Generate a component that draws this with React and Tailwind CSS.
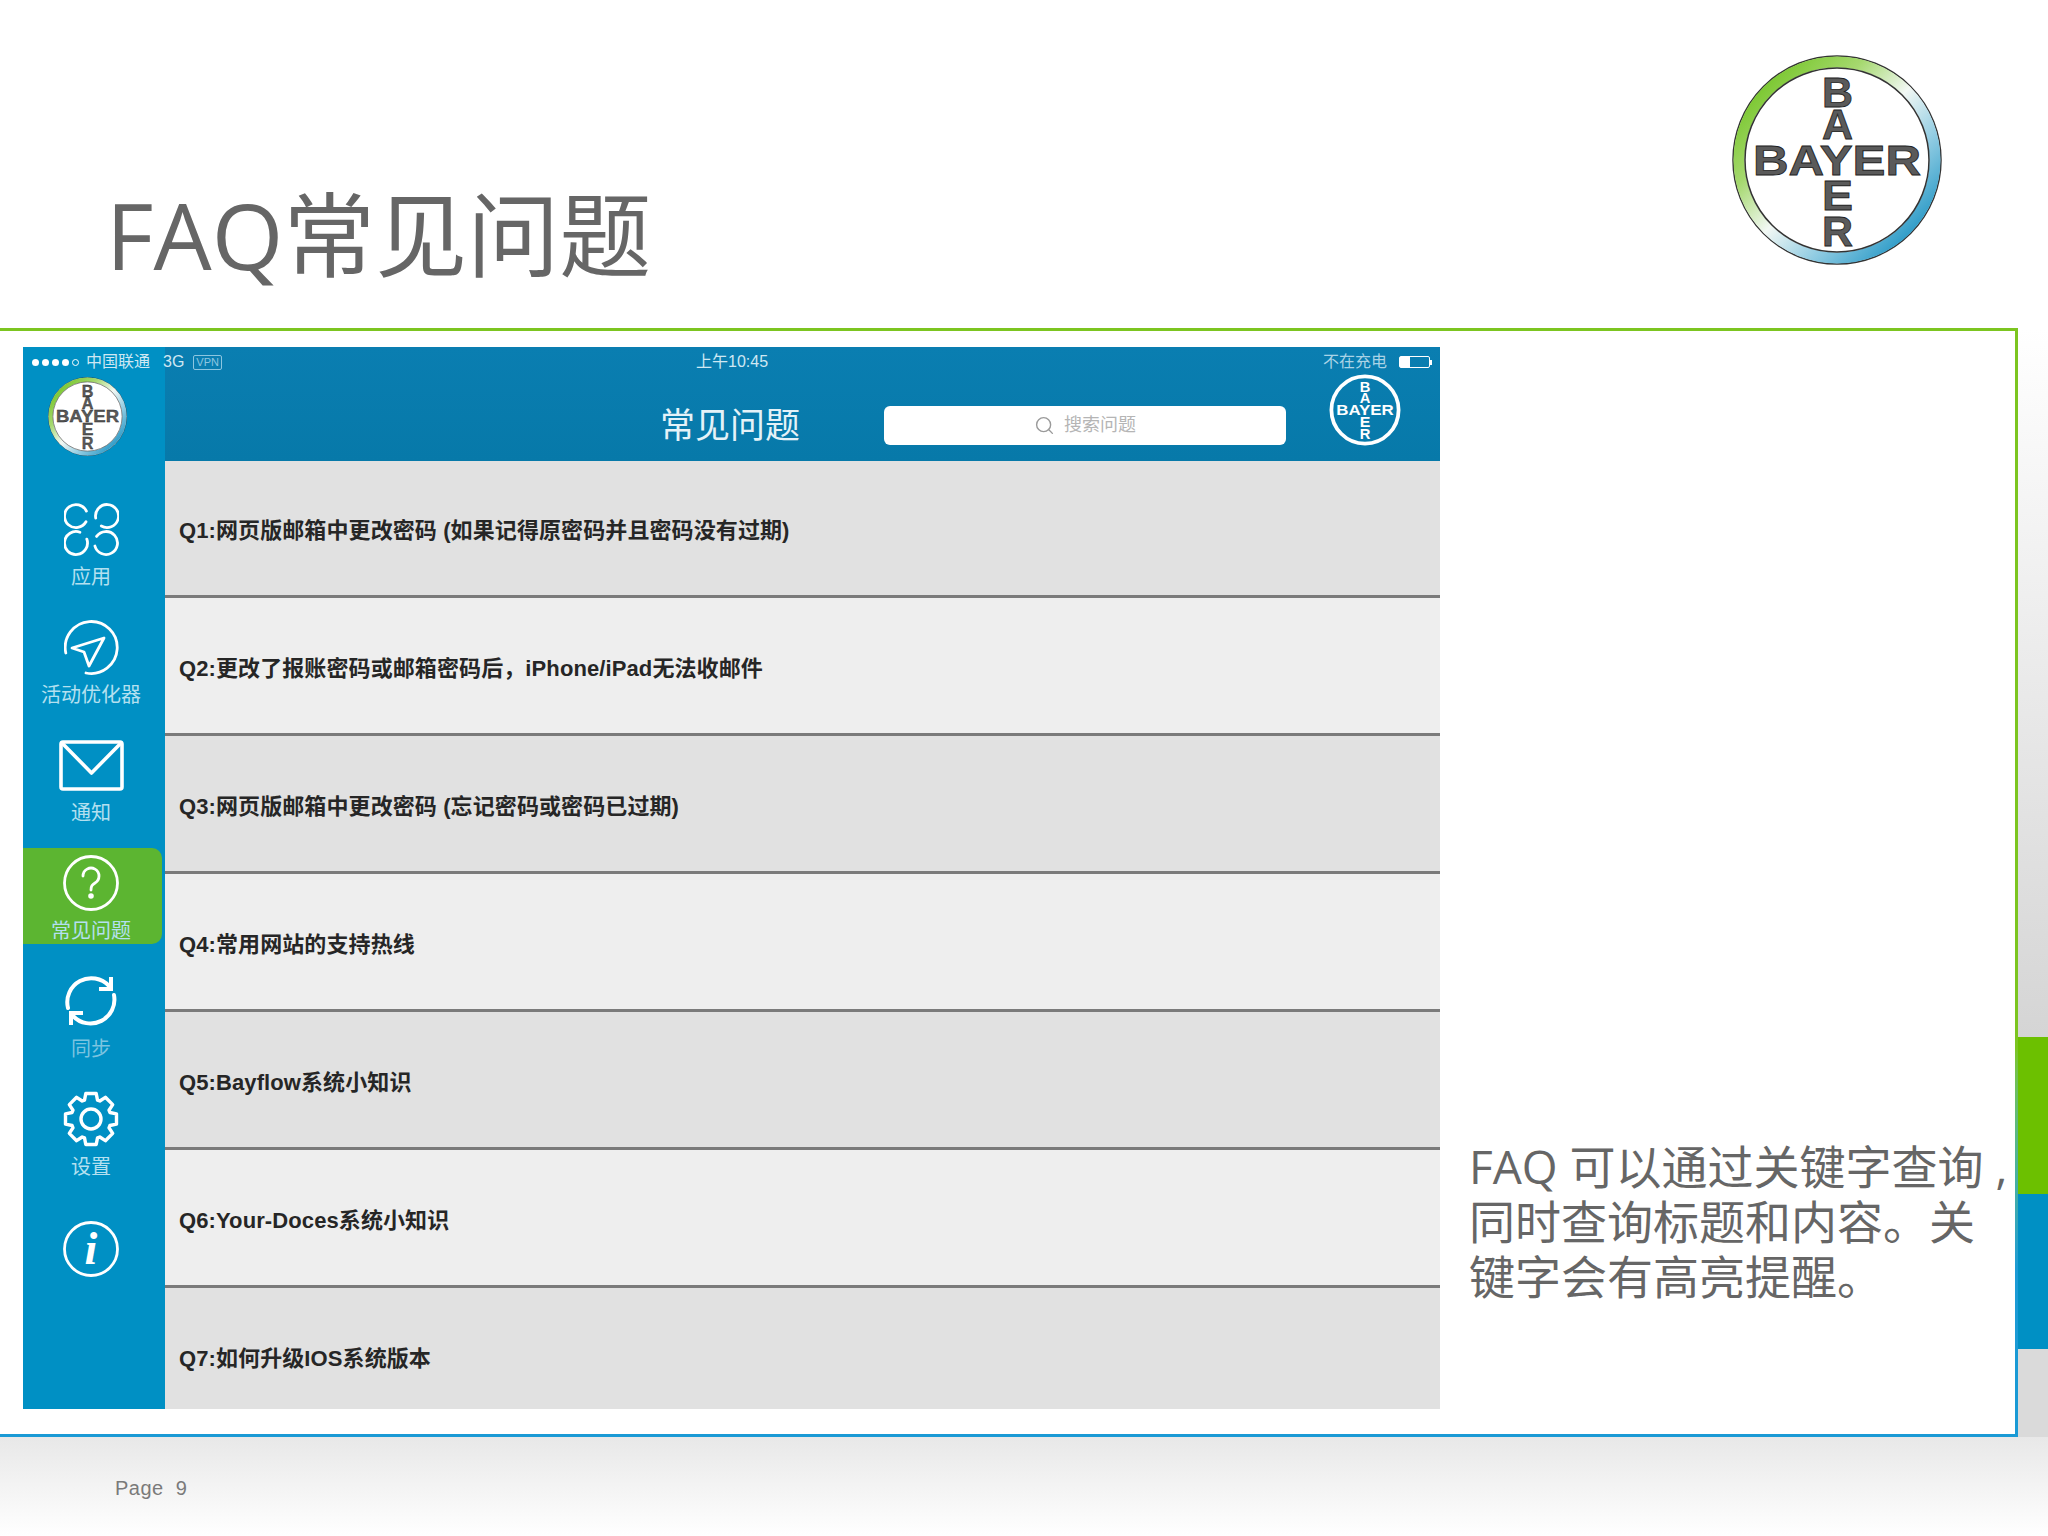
import { Search } from "lucide-react";

const questions = [
  "Q1:网页版邮箱中更改密码 (如果记得原密码并且密码没有过期)",
  "Q2:更改了报账密码或邮箱密码后，iPhone/iPad无法收邮件",
  "Q3:网页版邮箱中更改密码 (忘记密码或密码已过期)",
  "Q4:常用网站的支持热线",
  "Q5:Bayflow系统小知识",
  "Q6:Your-Doces系统小知识",
  "Q7:如何升级IOS系统版本",
];

function LogoLetters({ fill, stroke }) {
  const letter = (ch, y) => (
    <text x="90" y={y} textLength="31" lengthAdjust="spacingAndGlyphs" fontFamily="Liberation Sans" fontWeight="700" fontSize="42" fill={fill} stroke={stroke} strokeWidth="0.8">
      {ch}
    </text>
  );
  return (
    <>
      <text x="21" y="120" textLength="168" lengthAdjust="spacingAndGlyphs" fontFamily="Liberation Sans" fontWeight="700" fontSize="42" fill={fill} stroke={stroke} strokeWidth="0.8">
        BAYER
      </text>
      {letter("B", 52)}
      {letter("A", 84)}
      {letter("E", 155)}
      {letter("R", 191)}
    </>
  );
}

function BayerLogo({ className, id }) {
  return (
    <svg viewBox="0 0 210 210" className={className}>
      <defs>
        <linearGradient id={id} x1="0.12" y1="0.12" x2="0.88" y2="0.88">
          <stop offset="0" stopColor="#7cc832" />
          <stop offset="0.25" stopColor="#a5d86e" />
          <stop offset="0.5" stopColor="#f2f8f4" />
          <stop offset="0.75" stopColor="#8fcbe2" />
          <stop offset="1" stopColor="#2f9cc8" />
        </linearGradient>
      </defs>
      <circle cx="105" cy="105" r="104" fill="#fff" stroke="#333" strokeWidth="1.5" />
      <circle cx="105" cy="105" r="98" fill="none" stroke={`url(#${id})`} strokeWidth="11" />
      <circle cx="105" cy="105" r="92" fill="#fff" stroke="#333" strokeWidth="1.5" />
      <LogoLetters fill="#5a5a5a" stroke="#222" />
    </svg>
  );
}

function WhiteLogo() {
  return (
    <svg viewBox="0 0 210 210" className="h-[72px] w-[72px]">
      <circle cx="105" cy="105" r="98" fill="none" stroke="#fff" strokeWidth="11" />
      <LogoLetters fill="#fff" stroke="none" />
    </svg>
  );
}

const iconStroke = { fill: "none", stroke: "#fff", strokeLinecap: "round", strokeLinejoin: "round" };

// open circle, the gap runs clockwise from gapStart to gapEnd (degrees, y down)
function openCircle(cx, cy, r, gapStart, gapEnd) {
  const at = (deg) => {
    const a = (deg * Math.PI) / 180;
    return `${(cx + r * Math.cos(a)).toFixed(1)} ${(cy + r * Math.sin(a)).toFixed(1)}`;
  };
  return `M${at(gapEnd)}A${r} ${r} 0 1 1 ${at(gapStart)}`;
}

function AppsIcon() {
  return (
    <svg viewBox="0 0 55 53" className="h-[53px] w-[55px]" {...iconStroke} strokeWidth="2.8">
      <path d={openCircle(12, 13, 11.5, -25, 30)} />
      <path d={openCircle(43, 13, 11.5, 120, 170)} />
      <path d={openCircle(12, 40, 11.5, -70, -20)} />
      <path d={openCircle(42, 40, 11.5, 165, 215)} />
    </svg>
  );
}

function NavIcon() {
  return (
    <svg viewBox="0 0 55 55" className="h-[55px] w-[55px]" {...iconStroke} strokeWidth="2.8">
      <path d="M1.8 33A26 26 0 1 1 22 53" />
      <path d="M40 18L8 28L20 32L25 46Z" />
    </svg>
  );
}

function MailIcon() {
  return (
    <svg viewBox="0 0 65 51" className="h-[51px] w-[65px]" {...iconStroke} strokeWidth="3.6">
      <rect x="2" y="2" width="61" height="47" rx="2" />
      <path d="M3 3L32.5 33L62 3" />
    </svg>
  );
}

function HelpIcon() {
  return (
    <svg viewBox="0 0 56 56" className="h-[56px] w-[56px]" {...iconStroke} strokeWidth="2.8">
      <circle cx="28" cy="28" r="26.5" />
      <path d="M20 21a8 8 0 1 1 12 7c-3 2-4 3-4 7" />
      <circle cx="28" cy="41" r="1.4" fill="#fff" />
    </svg>
  );
}

function SyncIcon() {
  return (
    <svg viewBox="0 0 52 52" className="h-[52px] w-[52px]" {...iconStroke} strokeWidth="4">
      <path d="M3 33A24 24 0 0 1 44 11" />
      <path d="M46 2V14H34" strokeLinecap="butt" strokeLinejoin="miter" />
      <path d="M49 20A24 24 0 0 1 8 41" />
      <path d="M6 50V38H18" strokeLinecap="butt" strokeLinejoin="miter" />
    </svg>
  );
}

// gear outline with 8 teeth
function gearPath() {
  const pts = [];
  for (let i = 0; i < 8; i++) {
    const a = (i * Math.PI) / 4;
    [[-0.33, 20], [-0.2, 26], [0.2, 26], [0.33, 20]].forEach(([d, r]) => {
      pts.push(`${(28 + r * Math.cos(a + d)).toFixed(1)} ${(28 + r * Math.sin(a + d)).toFixed(1)}`);
    });
  }
  return `M${pts.join("L")}Z`;
}

function GearIcon() {
  return (
    <svg viewBox="0 0 56 56" className="h-[56px] w-[56px]" {...iconStroke} strokeWidth="3.4">
      <path d={gearPath()} />
      <circle cx="28" cy="28" r="10" />
    </svg>
  );
}

function InfoIcon() {
  return (
    <svg viewBox="0 0 56 56" className="h-[56px] w-[56px]">
      <circle cx="28" cy="28" r="26.5" fill="none" stroke="#fff" strokeWidth="2.8" />
      <text x="28" y="43" textAnchor="middle" fontFamily="Liberation Serif" fontStyle="italic" fontWeight="700" fontSize="46" fill="#fff">
        i
      </text>
    </svg>
  );
}

const navItems = [
  { label: "应用", icon: <AppsIcon /> },
  { label: "活动优化器", icon: <NavIcon /> },
  { label: "通知", icon: <MailIcon /> },
  { label: "常见问题", icon: <HelpIcon />, active: true },
  { label: "同步", icon: <SyncIcon />, dim: true },
  { label: "设置", icon: <GearIcon /> },
];

function Sidebar() {
  return (
    <div className="flex h-full w-[142px] shrink-0 flex-col bg-[#0090c4]">
      <div className="pl-[25px] pt-[30px]">
        <BayerLogo className="h-[79px] w-[79px]" id="ring-small" />
      </div>
      <div className="mt-[38px] flex flex-col gap-[22px]">
        {navItems.map((item) => (
          <div
            key={item.label}
            className={`flex h-[96px] w-[139px] flex-col items-center rounded-r-[10px] pr-[3px] pt-[7px] ${item.active ? "bg-[#5cb531]" : ""}`}
          >
            <div className="flex h-[56px] items-center justify-center">{item.icon}</div>
            <div className={`mt-[8px] text-[20px] leading-[24px] ${item.dim ? "text-[#7cc4e0]" : "text-[#b4e0f0]"}`}>
              {item.label}
            </div>
          </div>
        ))}
        <div className="mt-[12px] flex w-[139px] justify-center pr-[3px] pt-[7px]">
          <InfoIcon />
        </div>
      </div>
    </div>
  );
}

function StatusBar() {
  return (
    <div className="absolute left-0 right-0 top-0 flex h-[30px] items-center text-[16px] text-[#cfe8f3]">
      <div className="flex w-[230px] items-center pl-[9px]">
        <div className="flex gap-[3px]">
          {[0, 1, 2, 3].map((i) => (
            <span key={i} className="h-[7px] w-[7px] rounded-full bg-white" />
          ))}
          <span className="h-[7px] w-[7px] rounded-full border border-white" />
        </div>
        <span className="ml-[7px]">中国联通</span>
        <span className="ml-[13px]">3G</span>
        <span className="ml-[9px] rounded-[2px] border border-[#8cc6e0] px-[2px] text-[11px] leading-[13px] text-[#8cc6e0]">VPN</span>
      </div>
      <div className="ml-[443px] w-[76px] whitespace-nowrap">上午10:45</div>
      <div className="ml-[551px] whitespace-nowrap text-[#a9d3e6]">不在充电</div>
      <div className="ml-[12px] flex items-center">
        <div className="h-[12px] w-[31px] rounded-[2px] border border-white">
          <div className="h-full w-[10px] bg-white" />
        </div>
        <div className="h-[5px] w-[2px] bg-white" />
      </div>
    </div>
  );
}

function AppHeader() {
  return (
    <div className="flex h-[114px] shrink-0 items-end bg-gradient-to-b from-[#0a7eb1] to-[#0779a9] pb-[16px]">
      <div className="w-[635px] whitespace-nowrap text-right text-[35px] leading-[38px] text-[#e4f2f8]">常见问题</div>
      <div className="ml-[84px] flex h-[39px] w-[402px] items-center justify-center gap-[9px] rounded-[6px] bg-white text-[18px] text-[#b5b5b5]">
        <Search size={21} color="#9a9a9a" strokeWidth={1.6} />
        <span>搜索问题</span>
      </div>
      <div className="ml-[43px] -mb-[1px]">
        <WhiteLogo />
      </div>
    </div>
  );
}

function QuestionRow({ text, index }) {
  return (
    <div
      className={`flex shrink-0 items-center border-b-[3px] border-b-[#7a7a7a] pl-[14px] pt-[5px] text-[22px] font-bold tracking-[0.1px] text-[#262626] ${index === 0 ? "h-[137px]" : "h-[138px]"} ${index % 2 === 1 ? "bg-[#eeeeee]" : "bg-[#e1e1e1]"}`}
    >
      {text}
    </div>
  );
}

function AppScreen() {
  return (
    <div className="relative flex h-[1062px] w-[1417px] shrink-0 overflow-hidden">
      <Sidebar />
      <div className="flex min-w-0 flex-1 flex-col">
        <AppHeader />
        {questions.map((q, i) => (
          <QuestionRow key={q} text={q} index={i} />
        ))}
      </div>
      <StatusBar />
    </div>
  );
}

export default function App() {
  return (
    <div className="flex h-[1536px] w-[2048px] flex-col overflow-hidden bg-white font-['Liberation_Sans','Noto_Sans_CJK_SC',sans-serif]">
      <div className="flex h-[328px] shrink-0 items-start justify-between pl-[106px] pr-[106px]">
        <h1 className="mt-[173px] whitespace-nowrap font-['Open_Sans','Noto_Sans_CJK_SC',sans-serif] text-[92px] font-normal leading-[124px] text-[#666666]">
          FAQ常见问题
        </h1>
        <BayerLogo className="mt-[55px] h-[210px] w-[210px]" id="ring-large" />
      </div>

      <div className="flex h-[1109px] shrink-0">
        <div className="h-full w-[2018px] bg-gradient-to-b from-[#7cc520] from-[65%] to-[#1a9ad5] to-[85%] py-[3px] pr-[3px]">
          <div className="flex h-full bg-white pl-[23px] pt-[16px]">
            <AppScreen />
            <p className="ml-[29px] mt-[792px] whitespace-nowrap font-['Open_Sans','Noto_Sans_CJK_SC',sans-serif] text-[46px] font-normal leading-[55px] text-[#666666]">
              FAQ 可以通过关键字查询 ,
              <br />
              同时查询标题和内容。关
              <br />
              键字会有高亮提醒。
            </p>
          </div>
        </div>
        <div className="flex flex-1 flex-col">
          <div className="h-[709px] bg-gradient-to-b from-white to-[#d5d5d5]" />
          <div className="h-[157px] bg-[#6cc000]" />
          <div className="h-[155px] bg-[#0090c4]" />
          <div className="flex-1 bg-[#dadada]" />
        </div>
      </div>

      <div className="flex-1 bg-gradient-to-b from-[#e8e8e8] to-white pl-[115px] pt-[36px]">
        <span className="whitespace-pre text-[20px] tracking-[0.5px] text-[#7a7a7a]">Page  9</span>
      </div>
    </div>
  );
}
